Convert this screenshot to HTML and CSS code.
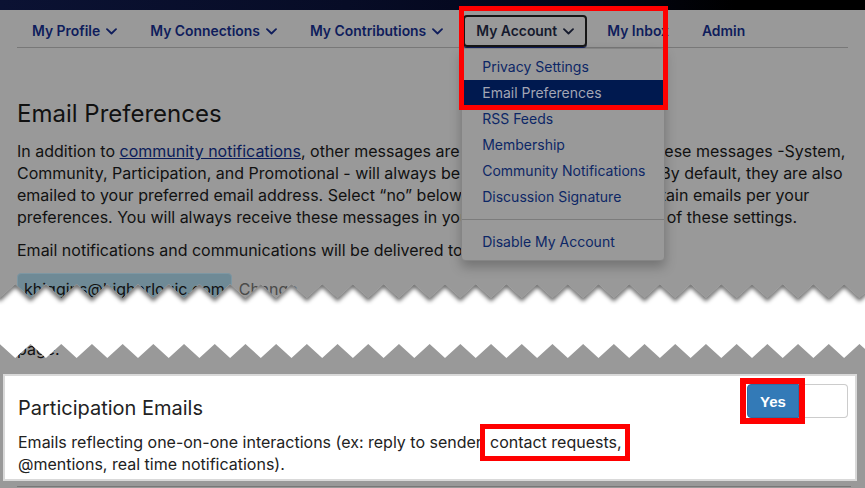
FILE: index.html
```html
<!DOCTYPE html>
<html lang="en">
<head>
    <meta charset="UTF-8">
    <meta name="viewport" content="width=device-width, initial-scale=1.0">
    <title>Email Preferences</title>
    <link rel="stylesheet" href="styles.css">
</head>
<body>

    <div class="top-strip"></div>

    <!-- First capture: page dimmed behind the open menu -->
    <div class="shot">
        <nav class="tabs">
            <ul>
                <li><a href="#">My Profile <svg class="chev" width="11" height="7" viewBox="0 0 11 7"><path d="M1 1.2l4.5 4.3L10 1.2"/></svg></a></li>
                <li><a href="#">My Connections <svg class="chev" width="11" height="7" viewBox="0 0 11 7"><path d="M1 1.2l4.5 4.3L10 1.2"/></svg></a></li>
                <li><a href="#">My Contributions <svg class="chev" width="11" height="7" viewBox="0 0 11 7"><path d="M1 1.2l4.5 4.3L10 1.2"/></svg></a></li>
                <li class="active">
                    <a href="#" class="open">My Account <svg class="chev" width="11" height="7" viewBox="0 0 11 7"><path d="M1 1.2l4.5 4.3L10 1.2"/></svg></a>
                    <div class="menu">
                        <a href="#">Privacy Settings</a>
                        <a href="#" class="current">Email Preferences</a>
                        <a href="#">RSS Feeds</a>
                        <a href="#">Membership</a>
                        <a href="#">Community Notifications</a>
                        <a href="#">Discussion Signature</a>
                        <hr>
                        <a href="#">Disable My Account</a>
                    </div>
                </li>
                <li><a href="#">My Inbox</a></li>
                <li><a href="#">Admin</a></li>
            </ul>
        </nav>

        <h1>Email Preferences</h1>
        <p class="intro">In addition to <a href="#">community notifications</a>, other messages are also sent to your Inbox. These messages -System, Community, Participation, and Promotional - will always be delivered into your Inbox. By default, they are also emailed to your preferred email address. Select “no” below if you would rather not obtain emails per your preferences. You will always receive these messages in your private Inbox regardless of these settings.</p>
        <p class="intro">Email notifications and communications will be delivered to the following address:</p>
        <div class="email-row">
            <span class="email-box">khiggins@higherlogic.com</span>
            <a href="#" class="change">Change</a>
        </div>
        <p class="intro">Click Change to update the address used for these emails on your profile<br>page.</p>
    </div>

    <!-- Second capture: the preference row -->
    <div class="pref-card">
        <div class="pref-head">
            <h2>Participation Emails</h2>
            <div class="toggle">
                <button class="on">Yes</button>
                <button class="off"></button>
            </div>
        </div>
        <p>Emails reflecting one-on-one interactions (ex: reply to sender, contact requests, @mentions, real time notifications).</p>
    </div>
    <div class="next-row"></div>

    <!-- torn edge between the two captures -->
    <svg class="tear" width="865" height="82" viewBox="0 0 865 82">
        <defs>
            <clipPath id="strip">
                <polygon id="strip-shape" points="-15.5,4 -0.15,18 15.2,4 30.55,18 45.9,4 61.25,18 76.6,4 91.95,18 107.3,4 122.65,18 138,4 153.35,18 168.7,4 184.05,18 199.4,4 214.75,18 230.1,4 245.45,18 260.8,4 276.15,18 291.5,4 306.85,18 322.2,4 337.55,18 352.9,4 368.25,18 383.6,4 398.95,18 414.3,4 429.65,18 445,4 460.35,18 475.7,4 491.05,18 506.4,4 521.75,18 537.1,4 552.45,18 567.8,4 583.15,18 598.5,4 613.85,18 629.2,4 644.55,18 659.9,4 675.25,18 690.6,4 705.95,18 721.3,4 736.65,18 752,4 767.35,18 782.7,4 798.05,18 813.4,4 828.75,18 844.1,4 859.45,18 874.8,4 874.8,78 859.45,64 844.1,78 828.75,64 813.4,78 798.05,64 782.7,78 767.35,64 752,78 736.65,64 721.3,78 705.95,64 690.6,78 675.25,64 659.9,78 644.55,64 629.2,78 613.85,64 598.5,78 583.15,64 567.8,78 552.45,64 537.1,78 521.75,64 506.4,78 491.05,64 475.7,78 460.35,64 445,78 429.65,64 414.3,78 398.95,64 383.6,78 368.25,64 352.9,78 337.55,64 322.2,78 306.85,64 291.5,78 276.15,64 260.8,78 245.45,64 230.1,78 214.75,64 199.4,78 184.05,64 168.7,78 153.35,64 138,78 122.65,64 107.3,78 91.95,64 76.6,78 61.25,64 45.9,78 30.55,64 15.2,78 -0.15,64 -15.5,78"/>
            </clipPath>
            <filter id="soft" x="-5%" y="-50%" width="110%" height="200%">
                <feGaussianBlur stdDeviation="2.2"/>
            </filter>
        </defs>
        <use href="#strip-shape" fill="#fff"/>
        <g clip-path="url(#strip)">
            <polyline filter="url(#soft)" fill="none" stroke="#000" stroke-opacity="0.6" stroke-width="5" points="-15.5,4 -0.15,18 15.2,4 30.55,18 45.9,4 61.25,18 76.6,4 91.95,18 107.3,4 122.65,18 138,4 153.35,18 168.7,4 184.05,18 199.4,4 214.75,18 230.1,4 245.45,18 260.8,4 276.15,18 291.5,4 306.85,18 322.2,4 337.55,18 352.9,4 368.25,18 383.6,4 398.95,18 414.3,4 429.65,18 445,4 460.35,18 475.7,4 491.05,18 506.4,4 521.75,18 537.1,4 552.45,18 567.8,4 583.15,18 598.5,4 613.85,18 629.2,4 644.55,18 659.9,4 675.25,18 690.6,4 705.95,18 721.3,4 736.65,18 752,4 767.35,18 782.7,4 798.05,18 813.4,4 828.75,18 844.1,4 859.45,18 874.8,4"/>
        </g>
    </svg>

    <!-- callout boxes -->
    <div class="mark mark-menu"></div>
    <div class="mark mark-text"></div>
    <div class="mark mark-yes"></div>

</body>
</html>
```

FILE: styles.css
```css
body {
    margin: 0;
    width: 865px;
    height: 488px;
    overflow: hidden;
    position: relative;
    background: #999999;
    font-family: Inter, "Noto Sans", sans-serif;
    color: #111111;
}

.top-strip {
    height: 10px;
    background: linear-gradient(90deg, #0b1233 0%, #070c26 40%, #03061a 65%, #000000 85%);
}

/* dimmed page */
.shot {
    height: 364px;
    overflow: hidden;
    padding: 0 17px;
    box-sizing: border-box;
}

.tabs ul {
    list-style: none;
    margin: 0;
    padding: 5px 0 0 2px;
    display: flex;
    gap: 7px;
    border-bottom: 1px solid #787878;
}

.tabs li {
    position: relative;
}

.tabs li > a {
    display: flex;
    align-items: center;
    gap: 6px;
    height: 32px;
    box-sizing: border-box;
    padding: 0 11px;
    border: 2px solid transparent;
    border-radius: 4px;
    color: #0f1d5c;
    font-size: 13.9px;
    font-weight: 600;
    text-decoration: none;
}

.tabs li > a.open {
    border-color: #161616;
    color: #151a2d;
    box-shadow: 0 1px 0 #0f1d5c;
}

.chev {
    fill: none;
    stroke: currentColor;
    stroke-width: 1.8;
    stroke-linecap: round;
    stroke-linejoin: round;
}

.menu {
    position: absolute;
    top: 33px;
    left: -2px;
    width: 204px;
    box-sizing: border-box;
    padding: 5px 0;
    background: #999999;
    border: 1px solid #858585;
    border-radius: 4px;
    box-shadow: 0 6px 12px rgba(0, 0, 0, 0.25);
    z-index: 2;
}

.menu a {
    display: block;
    padding: 0 20px;
    line-height: 26px;
    font-size: 14px;
    color: #0d2766;
    text-decoration: none;
    white-space: nowrap;
}

.menu a.current {
    background: #00194f;
    color: #a3a6b4;
}

.menu hr {
    border: 0;
    border-top: 1px solid #7c7c7c;
    margin: 9px 0;
}

h1 {
    margin: 51px 0 0;
    font-size: 24px;
    font-weight: 400;
    line-height: 30px;
}

.intro {
    margin: 11px 0 0;
    max-width: 830px;
    font-size: 16px;
    line-height: 22px;
}

.intro a {
    color: #0b1c5a;
}

.email-row {
    margin-top: 12px;
    display: flex;
    align-items: center;
    gap: 7px;
    font-size: 16px;
}

.email-box {
    background: #6f8a96;
    border: 1px solid #7d97a3;
    border-radius: 4px;
    padding: 4px 6px;
    line-height: 22px;
}

.change {
    color: #4a4a4a;
    text-decoration: none;
}

/* preference row */
.pref-card {
    margin: 0 8px 0 3px;
    padding: 8px 7px 4px 13px;
    background: #ffffff;
    border: 2px solid #d9d9d9;
    color: #222222;
}

.pref-head {
    display: flex;
    justify-content: space-between;
    align-items: flex-start;
}

.pref-head h2 {
    margin: 11px 0 0;
    font-size: 20px;
    font-weight: 400;
    line-height: 26px;
}

.toggle {
    display: flex;
}

.toggle button {
    height: 34px;
    margin: 0;
    padding: 0;
}

.toggle .on {
    width: 52px;
    background: #337ab7;
    border: 1px solid #2e6da4;
    border-radius: 4px 0 0 4px;
    color: #ffffff;
    font-family: "Liberation Sans", Arial, sans-serif;
    font-size: 15px;
    font-weight: bold;
}

.toggle .off {
    width: 49px;
    background: #ffffff;
    border: 1px solid #cccccc;
    border-left: 0;
    border-radius: 0 4px 4px 0;
}

.pref-card p {
    margin: 10px 0 0;
    max-width: 650px;
    font-size: 16px;
    line-height: 22px;
}

.next-row {
    margin: 5px 14px 0 17px;
    border-top: 1px solid #777777;
}

.tear {
    position: absolute;
    left: 0;
    top: 280px;
    z-index: 3;
}

.mark {
    position: absolute;
    box-sizing: border-box;
    border: 5px solid #ff0000;
    z-index: 4;
}

.mark-menu {
    left: 459px;
    top: 6px;
    width: 209px;
    height: 104px;
}

.mark-text {
    left: 480px;
    top: 424px;
    width: 150px;
    height: 37px;
}

.mark-yes {
    left: 740px;
    top: 378px;
    width: 65px;
    height: 46px;
    border-width: 6px;
}
```
